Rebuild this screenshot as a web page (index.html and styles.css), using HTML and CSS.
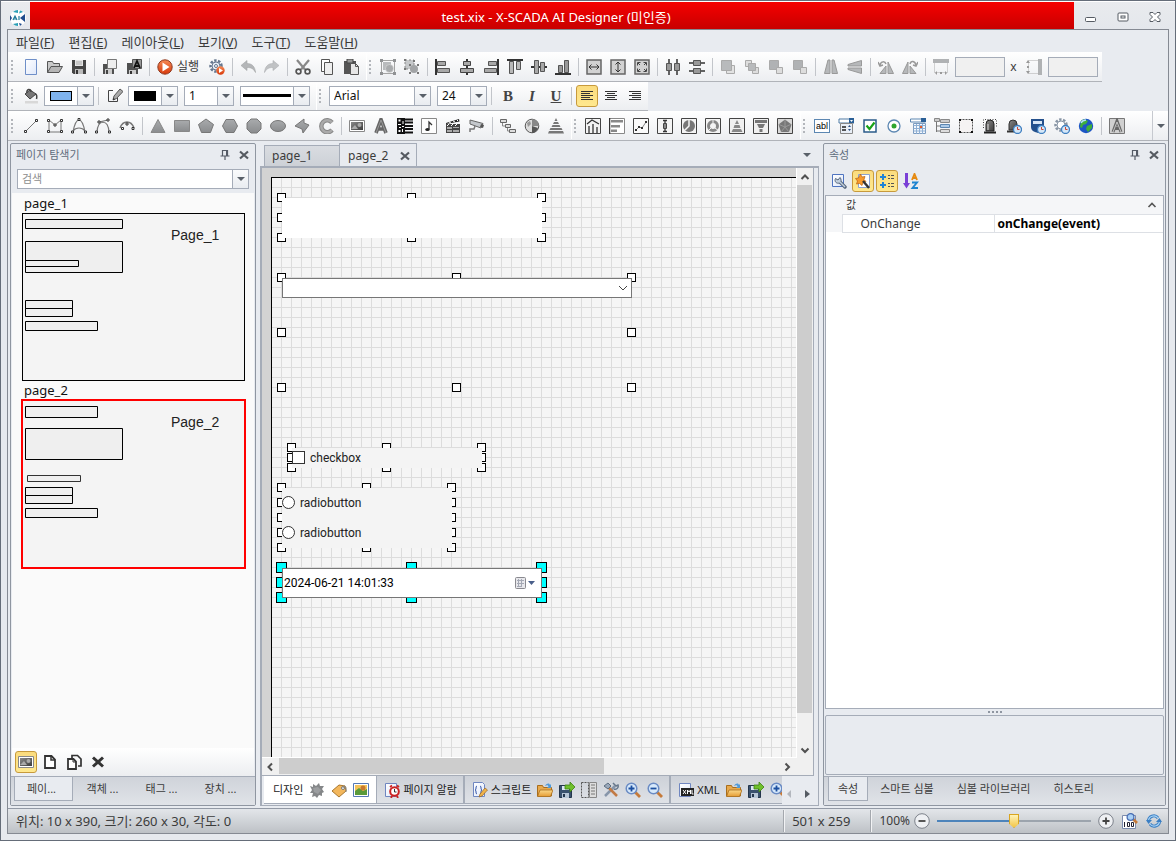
FILE: index.html
```html
<!DOCTYPE html>
<html lang="ko">
<head>
<meta charset="utf-8">
<title>test.xix - X-SCADA AI Designer</title>
<link rel="stylesheet" href="styles.css">
</head>
<body>
<svg class="sprite" aria-hidden="true">
<defs>
<linearGradient id="gr" x1="0" y1="0" x2="0" y2="1"><stop offset="0" stop-color="#a9abad"/><stop offset="1" stop-color="#8a8c8e"/></linearGradient>
<linearGradient id="dk" x1="0" y1="0" x2="1" y2="1"><stop offset="0" stop-color="#8a8a8a"/><stop offset="1" stop-color="#3c3c3c"/></linearGradient>
<linearGradient id="pg" x1="0" y1="0" x2="1" y2="1"><stop offset="0" stop-color="#fff"/><stop offset="1" stop-color="#dfe8fa"/></linearGradient>
<linearGradient id="or" x1="0" y1="0" x2="0" y2="1"><stop offset="0" stop-color="#f58a55"/><stop offset="1" stop-color="#d8390a"/></linearGradient>
<linearGradient id="fo" x1="0" y1="0" x2="0" y2="1"><stop offset="0" stop-color="#fbd98a"/><stop offset="1" stop-color="#e59c34"/></linearGradient>
</defs>
<symbol id="i-new" viewBox="0 0 16 16"><path d="M2.500.5h11v15h-11z" fill="url(#pg)" stroke="#6f8fc8"/></symbol>
<symbol id="i-open" viewBox="0 0 16 16"><path d="M.5 13.500v-11h5l1 2h6v3" fill="#c9c9c9" stroke="#555"/><path d="M.5 13.500l3.500-6h11.500l-3.500 6z" fill="#b5b5b5" stroke="#555"/></symbol>
<symbol id="i-save" viewBox="0 0 16 16"><path d="M1 1h14v14H2.500L1 13.500z" fill="#454545"/><path d="M4 1h8v6H4z" fill="#e4e4e4"/><path d="M5 3h6M5 5h6" stroke="#aaa"/><path d="M4 10h8v5H4z" fill="#bbb"/><path d="M5 11h2v4H5z" fill="#333"/></symbol>
<symbol id="i-saveas" viewBox="0 0 16 16"><path d="M1 5h11v10H1z" fill="#505050"/><path d="M3 10h7v5H3z" fill="#ccc"/><path d="M4 11h2v4H4z" fill="#444"/><path d="M5.500.500h9v9h-9z" fill="#eee" stroke="#777"/></symbol>
<symbol id="i-saveall" viewBox="0 0 16 16"><path d="M1 4h11v11H1z" fill="#505050"/><path d="M3 11h7v4H3z" fill="#ccc"/><path d="M4 12h2v3H4z" fill="#333"/><path d="M6.500.500h9v9h-9z" fill="#999" stroke="#555"/><path d="M8 9l3-7 3 7M9 7h4" fill="none" stroke="#111" stroke-width="1.800"/></symbol>
<symbol id="i-run" viewBox="0 0 16 16"><circle cx="8" cy="8" r="7.200" fill="url(#or)" stroke="#8f3a20"/><path d="M5.500 3.500l7 4.500-7 4.500z" fill="#fff"/></symbol>
<symbol id="i-gearrun" viewBox="0 0 16 16"><circle cx="7" cy="7" r="5.500" fill="none" stroke="#66778f" stroke-width="2.500" stroke-dasharray="2.400 1.500"/><circle cx="7" cy="7" r="4" fill="#e8eef6" stroke="#66778f"/><circle cx="7" cy="7" r="1.500" fill="#fff" stroke="#66778f"/><circle cx="11.500" cy="11.500" r="4.200" fill="url(#or)"/><path d="M10 9l4 2.500-4 2.500z" fill="#fff"/></symbol>
<symbol id="i-undo" viewBox="0 0 16 16"><path d="M1 6.500l6-5v3c5 0 8 3 8.500 9-2-4-4.500-5-8.500-5v3z" fill="#b4b6b8" stroke="#a2a4a6" stroke-width=".6"/></symbol>
<symbol id="i-redo" viewBox="0 0 16 16"><path d="M15 6.500l-6-5v3c-5 0-8 3-8.500 9 2-4 4.500-5 8.500-5v3z" fill="#c0c2c4" stroke="#adafb1" stroke-width=".6"/></symbol>
<symbol id="i-cut" viewBox="0 0 16 16"><path d="M2 1l8 9.500M14 1l-8 9.500" stroke="#888" stroke-width="2.200"/><circle cx="3.500" cy="12.500" r="2.400" fill="none" stroke="#555" stroke-width="1.700"/><circle cx="12.500" cy="12.500" r="2.400" fill="none" stroke="#555" stroke-width="1.700"/></symbol>
<symbol id="i-copy" viewBox="0 0 16 16"><path d="M2.500.500h8v12h-8z" fill="#fff" stroke="#555"/><path d="M5.500 3.500h8v12h-8z" fill="#eee" stroke="#555"/></symbol>
<symbol id="i-paste" viewBox="0 0 16 16"><path d="M1 2h12v13H1z" fill="#555"/><path d="M4 0h6v4H4z" fill="#999" stroke="#444"/><path d="M7.500 4.500h5l3 3v8h-8z" fill="#e6e6e6" stroke="#555"/><path d="M12.500 4.500v3h3" fill="none" stroke="#555"/></symbol>
<symbol id="i-group" viewBox="0 0 16 16"><path d="M1.500 1.500h13v13h-13z" fill="none" stroke="#a4a4a4"/><path d="M3 3h8v8H3z" fill="#b9bbbd"/><circle cx="9.500" cy="9.500" r="4" fill="#a9abad" stroke="#e4e4e4" stroke-width=".5"/><path d="M0 0h3v3H0zM13 0h3v3h-3zM0 13h3v3H0zM13 13h3v3h-3z" fill="#909294"/></symbol>
<symbol id="i-ungroup" viewBox="0 0 16 16"><path d="M1 1h9v9H1z" fill="#c6c8ca" stroke="#888" stroke-dasharray="2 2"/><circle cx="10" cy="10" r="4" fill="#a2a4a6"/><path d="M0 0h2v2H0zM9 1h2v2H9zM0 9h2v2H0zM5 5h2v2H5zM13 5h2v2h-2zM5 13h2v2H5zM13 13h2v2h-2z" fill="#777"/></symbol>
<symbol id="i-al" viewBox="0 0 16 16"><path d="M1 0v16" stroke="#333" stroke-width="2"/><path d="M2.500 2.500h8v4h-8zM2.500 9.500h12v4h-12z" fill="#a8a8a8" stroke="#555"/></symbol>
<symbol id="i-ac" viewBox="0 0 16 16"><path d="M8 0v16" stroke="#333" stroke-width="2"/><path d="M4.500 2.500h7v4h-7zM1.500 9.500h13v4h-13z" fill="#a8a8a8" stroke="#444"/></symbol>
<symbol id="i-ar" viewBox="0 0 16 16"><path d="M15 0v16" stroke="#333" stroke-width="2"/><path d="M5.500 2.500h8v4h-8zM1.500 9.500h12v4h-12z" fill="#a8a8a8" stroke="#555"/></symbol>
<symbol id="i-at" viewBox="0 0 16 16"><path d="M0 1h16" stroke="#333" stroke-width="2"/><path d="M2.500 2.500h4v12h-4zM9.500 2.500h4v8h-4z" fill="#b8b8b8" stroke="#555"/></symbol>
<symbol id="i-am" viewBox="0 0 16 16"><path d="M0 8h16" stroke="#333" stroke-width="2"/><path d="M3.500 1.500h4v13h-4zM9.500 3.500h4v9h-4z" fill="#a8a8a8" stroke="#555"/></symbol>
<symbol id="i-ab" viewBox="0 0 16 16"><path d="M0 15h16" stroke="#333" stroke-width="2"/><path d="M3.500 6.500h4v7h-4zM9.500 1.500h4v12h-4z" fill="#999" stroke="#555"/></symbol>
<symbol id="i-sw" viewBox="0 0 16 16"><path d="M1 1h14v14H1z" fill="#d2d2d2" stroke="#666" stroke-width="1.500"/><path d="M3 8h10M5.500 5.500L3 8l2.500 2.500M10.500 5.500L13 8l-2.500 2.500" fill="none" stroke="#333"/></symbol>
<symbol id="i-sh" viewBox="0 0 16 16"><path d="M1 1h14v14H1z" fill="#d2d2d2" stroke="#666" stroke-width="1.500"/><path d="M8 3v10M5.500 5.500L8 3l2.500 2.500M5.500 10.500L8 13l2.500-2.500" fill="none" stroke="#333"/></symbol>
<symbol id="i-sb" viewBox="0 0 16 16"><path d="M1 1h14v14H1z" fill="#d2d2d2" stroke="#666" stroke-width="1.500"/><path d="M4 4l8 8M12 4l-8 8M3.500 6.500v-3h3M9.500 3.500h3v3M3.500 9.500v3h3M12.500 9.500v3h-3" fill="none" stroke="#444"/><path d="M6 6h4v4H6z" fill="#d2d2d2"/></symbol>
<symbol id="i-dh" viewBox="0 0 16 16"><path d="M4 0v16M12 0v16" stroke="#333" stroke-width="1.500"/><path d="M1.500 4.500h5v7h-5zM9.500 4.500h5v7h-5z" fill="#999" stroke="#555"/></symbol>
<symbol id="i-dv" viewBox="0 0 16 16"><path d="M0 4h16M0 12h16" stroke="#333" stroke-width="1.500"/><path d="M4.500 1.500h7v5h-7zM4.500 9.500h7v5h-7z" fill="#999" stroke="#555"/></symbol>
<symbol id="i-z1" viewBox="0 0 16 16"><g stroke="#aaa"><path d="M6.500 6.500h8v8h-8z" fill="#e2e2e2"/><path d="M1.500 1.500h10v10h-10z" fill="#b8babc"/></g></symbol>
<symbol id="i-z2" viewBox="0 0 16 16"><g stroke="#aaa"><path d="M1.500 1.500h6v6h-6z" fill="#ddd"/><path d="M8.500 8.500h6v6h-6z" fill="#ddd"/><path d="M4.500 4.500h7v7h-7z" fill="#b8babc"/></g></symbol>
<symbol id="i-z3" viewBox="0 0 16 16"><g stroke="#aaa"><path d="M1.500 1.500h9v9h-9z" fill="#b0b2b4"/><path d="M8.500 8.500h6v6h-6z" fill="#ddd"/></g></symbol>
<symbol id="i-fh" viewBox="0 0 16 16"><path d="M7 1H5L1.500 14.500H7zM9 1h2l3.500 13.500H9z" fill="#b6b8ba" stroke="#999"/></symbol>
<symbol id="i-fv" viewBox="0 0 16 16"><path d="M1 7V5.500l13.500-4V7zM1 9v1.500l13.500 4V9z" fill="#b6b8ba" stroke="#999"/></symbol>
<symbol id="i-rl" viewBox="0 0 16 16"><path d="M8 14.500V7l-6 7.500zM10 14.500V3l5.500 11.500z" fill="#b6b8ba" stroke="#999"/><path d="M2 6c1-4 5-4 6-1M0 3l2 4 3-1" fill="none" stroke="#999" stroke-width="1.500"/></symbol>
<symbol id="i-rr" viewBox="0 0 16 16"><path d="M6 14.500V3L.5 14.500zM8 14.500V7l6 7.500z" fill="#b6b8ba" stroke="#999"/><path d="M8 5c1-4 5-3 6 1M16 3l-2 4-3-1" fill="none" stroke="#999" stroke-width="1.500"/></symbol>
<symbol id="i-w" viewBox="0 0 16 16"><path d="M0 0h16v4H0z" fill="#b0b2b4"/><path d="M1.500 4.500v9h13v-9" fill="none" stroke="#aaa" stroke-dasharray="1 1"/><path d="M2 14l2-2v4zM14 14l-2-2v4zM7 13h2v2H7z" fill="#999"/></symbol>
<symbol id="i-h" viewBox="0 0 16 16"><path d="M12 0h4v16h-4z" fill="#b0b2b4"/><path d="M12.500 1.500h-10v13h10" fill="none" stroke="#aaa" stroke-dasharray="1 1"/><path d="M2 1l2 3H0zM2 15l2-3H0zM1 7h2v2H1z" fill="#999"/></symbol>
<symbol id="i-fill" viewBox="0 0 16 16"><path d="M2 6l5-4 6 4-6 5z" fill="#777" stroke="#444"/><path d="M4 5c-1-4 4-5 4-1M12 6c2 0 2 3 1.500 5" fill="none" stroke="#444" stroke-width="1.500"/><path d="M2 13h13v2.500H2z" fill="#d8d8d8"/></symbol>
<symbol id="i-pen" viewBox="0 0 16 16"><path d="M6 2.500H1.500v11h9V10" fill="none" stroke="#444"/><path d="M6 12l1-4 6-7 3 2.500-6.500 7z" fill="#aaa" stroke="#555"/><path d="M6 12l.5-2 1.500 1.200z" fill="#222"/></symbol>
<symbol id="i-tl" viewBox="0 0 16 16"><path d="M2 3.500h12M2 5.500h9M2 7.500h12M2 9.500h9M2 11.500h12" stroke="#333"/></symbol>
<symbol id="i-tc" viewBox="0 0 16 16"><path d="M2 3.500h12M4 5.500h8M2 7.500h12M4 9.500h8M2 11.500h12" stroke="#333"/></symbol>
<symbol id="i-tr" viewBox="0 0 16 16"><path d="M2 3.500h12M5 5.500h9M2 7.500h12M5 9.500h9M2 11.500h12" stroke="#333"/></symbol>
<symbol id="i-line" viewBox="0 0 16 16"><path d="M3 13L13 3" stroke="#777"/><path d="M1.500 12.500h2v2h-2zM12.500 1.500h2v2h-2z" fill="#fff" stroke="#333"/></symbol>
<symbol id="i-poly" viewBox="0 0 16 16"><path d="M2 2l6 5 6-5v12H2z" fill="none" stroke="#777"/><path d="M.5 1.500h2v2h-2zM13.500 1.500h2v2h-2zM7 6h2v2H7zM.5 12.500h2v2h-2zM13.500 12.500h2v2h-2z" fill="#fff" stroke="#333"/></symbol>
<symbol id="i-curve" viewBox="0 0 16 16"><path d="M2 14C5-2 11-2 14 14M2 13c3-4 9-4 12 0" fill="none" stroke="#777" stroke-width="1.200"/><path d="M7 .5h2v2H7zM.5 13h2v2h-2zM13.500 13h2v2h-2z" fill="#fff" stroke="#333"/></symbol>
<symbol id="i-curve2" viewBox="0 0 16 16"><path d="M2 14C3 1 13 1 14 14M4 4l9-2" fill="none" stroke="#777" stroke-width="1.200"/><path d="M3 3h2v2H3zM12 1h2v2h-2zM.5 13h2v2h-2zM13.500 13h2v2h-2z" fill="#fff" stroke="#333"/></symbol>
<symbol id="i-arc" viewBox="0 0 16 16"><path d="M1 10C4 2 12 2 15 10" fill="none" stroke="#777" stroke-width="1.500"/><path d="M7 5h2v2H7zM2.500 9.500h2v2h-2zM13 9.500h2v2h-2z" fill="#fff" stroke="#333"/></symbol>
<symbol id="i-tri" viewBox="0 0 16 16"><path d="M8 1.500l7 13H1z" fill="url(#gr)" stroke="#888"/></symbol>
<symbol id="i-rect" viewBox="0 0 16 16"><path d="M.5 2.500h15v11H.5z" fill="url(#gr)" stroke="#888"/></symbol>
<symbol id="i-pent" viewBox="0 0 16 16"><path d="M8 1l7.500 5.500-3 8h-9l-3-8z" fill="url(#gr)" stroke="#777"/></symbol>
<symbol id="i-hex" viewBox="0 0 16 16"><path d="M4 1.500h8L15.500 8 12 14.500H4L.5 8z" fill="url(#gr)" stroke="#777"/></symbol>
<symbol id="i-oct" viewBox="0 0 16 16"><path d="M5 1h6l4 4v6l-4 4H5l-4-4V5z" fill="url(#gr)" stroke="#777"/></symbol>
<symbol id="i-ell" viewBox="0 0 16 16"><ellipse cx="8" cy="8" rx="7.500" ry="5.500" fill="url(#gr)" stroke="#777"/></symbol>
<symbol id="i-free" viewBox="0 0 16 16"><path d="M1 8l9-7v4l5 2-6 8-1-4z" fill="url(#gr)" stroke="#777"/></symbol>
<symbol id="i-c" viewBox="0 0 16 16"><path d="M14 4.500a6 6 0 1 0 0 7.500" fill="none" stroke="#888" stroke-width="4.500"/><path d="M14 4.500a6 6 0 1 0 0 7.500" fill="none" stroke="#aaa" stroke-width="2.500"/></symbol>
<symbol id="i-img" viewBox="0 0 16 16"><path d="M.5 2.500h15v11H.5z" fill="#fff" stroke="#888"/><path d="M2 4h12v8H2z" fill="url(#dk)"/><path d="M2 11l4-4 3 4z" fill="#aaa"/><circle cx="10.500" cy="7" r="2" fill="#aaa"/></symbol>
<symbol id="i-a" viewBox="0 0 16 16"><path d="M3 15L8 1.500 13 15M5 11h6" fill="none" stroke="#666" stroke-width="3.600"/><path d="M3 15L8 2 13 15" fill="none" stroke="#999" stroke-width="1"/></symbol>
<symbol id="i-qr" viewBox="0 0 16 16"><path d="M0 0h8v16H0z" fill="#111"/><path d="M1.500 1.500h2v2h-2zM1.500 12h2v2h-2zM5.500 3h1v3h-1zM1 6h3v1H1zM2 9h2v1H2zM5 8h2v1H5zM5 11h1v3H5z" fill="#fff"/><path d="M8 1.500h8M8 4.500h8M8 8h8M8 11h8M8 14.500h8" stroke="#111" stroke-width="2"/></symbol>
<symbol id="i-note" viewBox="0 0 16 16"><path d="M.5.500h15v15H.5z" fill="#fdfdfd" stroke="#888"/><path d="M8 11V4l3 3" fill="none" stroke="#333" stroke-width="1.300"/><ellipse cx="6.500" cy="11.500" rx="2.200" ry="1.600" fill="#222"/></symbol>
<symbol id="i-clap" viewBox="0 0 16 16"><path d="M1 6h14v9H1z" fill="#444"/><path d="M2 9h5v2H2zM8 9h6v1H8zM2 12h5v2H2zM8 12h6v2H8z" fill="#aaa"/><path d="M1 5l13-4 .5 2.500L1 6z" fill="#222"/><path d="M4 4l2 1M8 3l2 1M12 2l1 1M4 6l-2 2M8 6L6 8M12 6l-2 2" stroke="#fff"/></symbol>
<symbol id="i-cctv" viewBox="0 0 16 16"><path d="M1 2l13 3.500L12 10 1 6z" fill="#c4c8cc" stroke="#666"/><path d="M12 6l3 1-1 3-3-1z" fill="#555"/><path d="M6 8l-1 3H1v3" fill="none" stroke="#777" stroke-width="1.500"/></symbol>
<symbol id="i-flow" viewBox="0 0 16 16"><path d="M.5 1.500h6v3h-6zM5.500 6.500h5v3h-5zM9.500 11.500h6v3h-6z" fill="#ddd" stroke="#666"/><path d="M2.500 5v3H5M7.500 10v3H9" fill="none" stroke="#888"/></symbol>
<symbol id="i-globe" viewBox="0 0 16 16"><circle cx="8" cy="8" r="6.800" fill="#ddd" stroke="#555"/><path d="M8 8L8 1a7 7 0 0 1 7 7z" fill="#888"/><path d="M8 8l6 2a7 7 0 0 1-6 5z" fill="#555"/><path d="M3 5l3-2 1 3-3 3z" fill="#999"/></symbol>
<symbol id="i-pyr" viewBox="0 0 16 16"><path d="M8 0l1.500 3h-3zM6 4h4l1 2H5zM4.500 7h7l1 2h-9zM2.500 10h11l1 2h-13zM1 13h14l1 2.500H0z" fill="#777"/></symbol>
<symbol id="i-ch1" viewBox="0 0 16 16"><path d="M.5.500h15v15H.5z" fill="#f4f4f4" stroke="#444"/><path d="M2 6l5-4 7 4" fill="none" stroke="#333" stroke-width="1.300"/><path d="M3 8h2v7H3zM7 6h2v9H7zM11 9h2v6h-2z" fill="#777"/></symbol>
<symbol id="i-ch2" viewBox="0 0 16 16"><path d="M.5.500h15v15H.5z" fill="#fff" stroke="#888"/><path d="M.5 0v16" stroke="#333" stroke-width="1.500"/><path d="M2 2h12v2.500H2zM2 7h9v2.500H2zM2 11.500h6V14H2z" fill="#888"/></symbol>
<symbol id="i-ch3" viewBox="0 0 16 16"><path d="M.5.500h15v15H.5z" fill="#fafafa" stroke="#444"/><path d="M3 12l3-3 3 1 4-6" fill="none" stroke="#888"/><path d="M2 11h2v2H2zM5 8h2v2H5zM8 9h2v2H8zM12 3h2v2h-2z" fill="#333"/></symbol>
<symbol id="i-ch4" viewBox="0 0 16 16"><path d="M.5.500h15v15H.5z" fill="#f4f4f4" stroke="#444"/><path d="M8 2v12M6 2.500h4M6 13.500h4" stroke="#333" stroke-width="1.300"/><path d="M6.500 5.500h3v5h-3z" fill="#888" stroke="#444"/></symbol>
<symbol id="i-ch5" viewBox="0 0 16 16"><path d="M.5.500h15v15H.5z" fill="#f4f4f4" stroke="#444"/><circle cx="8" cy="8" r="6" fill="#777"/><path d="M8 1v7l-5 5" stroke="#f4f4f4" stroke-width="1.500" fill="none"/></symbol>
<symbol id="i-ch6" viewBox="0 0 16 16"><path d="M.5.500h15v15H.5z" fill="#f4f4f4" stroke="#444"/><circle cx="8" cy="8" r="4.500" fill="none" stroke="#888" stroke-width="3"/><path d="M8 5V1M10 10l4 3M6 10l-3 3" stroke="#f4f4f4"/></symbol>
<symbol id="i-ch7" viewBox="0 0 16 16"><path d="M.5.500h15v15H.5z" fill="#f0f0f0" stroke="#444"/><path d="M8 2l2 4H6zM5.500 7h5l1 3h-7zM4 11h8l1.500 3h-11z" fill="#888"/></symbol>
<symbol id="i-ch8" viewBox="0 0 16 16"><path d="M.5.500h15v15H.5z" fill="#f0f0f0" stroke="#444"/><path d="M2 2h12v3H2zM4 6h8l-2 4H6zM6.500 11h3v3h-3z" fill="#777"/></symbol>
<symbol id="i-ch9" viewBox="0 0 16 16"><path d="M.5.500h15v15H.5z" fill="#d8d8d8" stroke="#444"/><path d="M8 1.500l6.500 5-2.500 7.500H4L1.500 6.500z" fill="#777"/><path d="M8 2v7M8 9l5.500-2.500M8 9l3.500 4.500M8 9l-3.500 4.500M8 9L2 6.500" stroke="#999"/></symbol>
<symbol id="i-cmb" viewBox="0 0 16 16"><path d="M1 1h15v4H1z" fill="#fff" stroke="#4f7aa5"/><path d="M11 0h5v5h-5z" fill="#2a5f96"/><path d="M12 2h3l-1.500 2z" fill="#fff"/><path d="M2.500 5.500h12v10h-12z" fill="#e9eff7" stroke="#888"/><path d="M4 9h4M4 12h4" stroke="#222" stroke-width="1.300"/><path d="M10 9l1.500-2L13 9zM10 11l1.500 2 1.500-2z" fill="#2a4f86"/></symbol>
<symbol id="i-chk" viewBox="0 0 16 16"><path d="M2 2h12v12H2z" fill="#fff" stroke="#2b5c8a" stroke-width="1.500"/><path d="M4.500 7.500l3 3.500 5-6.500" fill="none" stroke="#18a218" stroke-width="2.200"/></symbol>
<symbol id="i-rad" viewBox="0 0 16 16"><circle cx="8" cy="8" r="6" fill="#fff" stroke="#5c87b2" stroke-width="1.300"/><circle cx="8" cy="8" r="2.500" fill="#2ea52e"/></symbol>
<symbol id="i-cal" viewBox="0 0 16 16"><path d="M.5 1h15v3H.5z" fill="#fff" stroke="#5c87b2"/><path d="M11 0h5v4h-5z" fill="#2a5f96"/><path d="M3.500 5.500h12v10h-12z" fill="#f4f8fd" stroke="#7c9cc0"/><path d="M3.500 7.500h12M3.500 10.500h12M3.500 13h12M6.500 6v10M9.500 6v10M12.500 6v10" stroke="#8fb0d4"/><path d="M10 8h2v2h-2z" fill="#e45c2c"/></symbol>
<symbol id="i-tree" viewBox="0 0 16 16"><path d="M2.500 2v12M2.500 8H6M2.500 13H6" stroke="#777" fill="none"/><path d="M.5.500h5v3h-5zM6.500 1.500h9v3h-9z" fill="#ccc" stroke="#888"/><path d="M6.500 6.500h9v3h-9z" fill="#aecbe8" stroke="#5c87b2"/><path d="M6.500 11.500h9v3h-9z" fill="#ddd" stroke="#888"/></symbol>
<symbol id="i-pnl" viewBox="0 0 16 16"><path d="M1.500 1.500h13v13h-13z" fill="#f5f3f3" stroke="#555" stroke-dasharray="2 1"/><path d="M1 1h2v2H1zM13 1h2v2h-2zM1 13h2v2H1zM13 13h2v2h-2z" fill="#111"/></symbol>
<symbol id="i-sir" viewBox="0 0 16 16"><path d="M4 13V6a4 4 0 0 1 8 0v7z" fill="url(#dk)" stroke="#222"/><path d="M2 13.500h12v2H2z" fill="#222"/><path d="M6 12V6" stroke="#ddd"/><path d="M1.500 10V1.500h13V10" fill="none" stroke="#444" stroke-dasharray="1 1.500"/></symbol>
<symbol id="i-sirc" viewBox="0 0 16 16"><path d="M3 12V6a4 4 0 0 1 8 0v6z" fill="url(#dk)" stroke="#333"/><path d="M1 12.500h10v2H1z" fill="#333"/><circle cx="11.500" cy="11.500" r="4" fill="#d4e7f8" stroke="#3f7fc0" stroke-width="1.300"/><path d="M11.500 9v2.500h2" stroke="#c43" fill="none"/></symbol>
<symbol id="i-dbc" viewBox="0 0 16 16"><path d="M1 1h13v8c0 4-4 5-6 6-3-1-7-2-7-6z" fill="#24508c"/><path d="M3 3h9v3H3z" fill="#d8e6f5"/><circle cx="11.500" cy="11.500" r="4" fill="#d4e7f8" stroke="#3f7fc0" stroke-width="1.300"/><path d="M11.500 9v2.500h2" stroke="#c43" fill="none"/></symbol>
<symbol id="i-gearc" viewBox="0 0 16 16"><circle cx="7" cy="7" r="5.500" fill="none" stroke="#8794a4" stroke-width="2.500" stroke-dasharray="2.400 1.500"/><circle cx="7" cy="7" r="4" fill="#fff" stroke="#8794a4"/><circle cx="11.500" cy="11.500" r="4" fill="#d4e7f8" stroke="#3f7fc0" stroke-width="1.300"/><path d="M11.500 9v2.500h2" stroke="#c43" fill="none"/></symbol>
<symbol id="i-earth" viewBox="0 0 16 16"><circle cx="8" cy="8" r="7.200" fill="#1c55c4"/><path d="M3 3c3-3 5-1 7 0l-2 3-3 1-1 3-2-1zM9 8l5-2v4l-4 4-2-3z" fill="#3fae3a"/><path d="M3 5c1-2 3-3 5-3" stroke="#b7e0ff" fill="none" stroke-width="1.300"/></symbol>
<symbol id="i-abox" viewBox="0 0 16 16"><path d="M.5.500h15v15H.5z" fill="#d0d0d0" stroke="#777"/><path d="M4 14L8 3l4 11M5.500 10.500h5" fill="none" stroke="#666" stroke-width="3"/><path d="M4 14L8 4l4 10" fill="none" stroke="#ddd" stroke-width=".8"/></symbol>
<symbol id="i-pin" viewBox="0 0 12 12"><path d="M3.500 1v6M8.500 1v6M3 1.500h6M1.500 7h9M6 7v4" stroke="#555b66" stroke-width="1.200" fill="none"/><path d="M7.500 2v5" stroke="#555b66"/></symbol>
<symbol id="i-x" viewBox="0 0 12 12"><path d="M2 2.500l8 7M10 2.500l-8 7" stroke="#555a61" stroke-width="2.200"/></symbol>
<symbol id="i-doc" viewBox="0 0 16 16"><path d="M3 2h6.500L13 5.500V14H3z" fill="#fff" stroke="#333" stroke-width="1.800"/><path d="M9 2v4h4" fill="none" stroke="#333" stroke-width="1.500"/></symbol>
<symbol id="i-docs" viewBox="0 0 16 16"><path d="M6 4V1.500h5.500L15 5v7h-3" fill="none" stroke="#333" stroke-width="1.700"/><path d="M2 5h5.500L10 7.500V15H2z" fill="#fff" stroke="#333" stroke-width="1.800"/><path d="M7 5v3h3" fill="none" stroke="#333"/></symbol>
<symbol id="i-xb" viewBox="0 0 16 16"><path d="M3 3.500l10 9M13 3.500l-10 9" stroke="#333" stroke-width="3"/></symbol>
<symbol id="i-puz" viewBox="0 0 16 16"><path d="M1 4l3 1 0-3 3 2 3-3 1 3 4 0-2 3 2 3-2 1 0 3-3-1-2 3-2-2-3 1 1-4-3 0 2-3z" fill="#858789"/><path d="M4 6l5-1 3 3-3 4-4-2z" fill="#9c9ea0"/></symbol>
<symbol id="i-tag" viewBox="0 0 16 16"><path d="M1 9l7-6 6 1 1 5-7 6z" fill="#f3b75c" stroke="#a9772e"/><circle cx="12" cy="6" r="1.500" fill="#fff" stroke="#777"/><path d="M12 6c1-4 4-2 3 4" fill="none" stroke="#888"/></symbol>
<symbol id="i-pic" viewBox="0 0 16 16"><path d="M.5 1.500h15v13H.5z" fill="#fff" stroke="#5579b5"/><path d="M2 3h12v10H2z" fill="#f4c35a"/><path d="M2 9l4-3 4 3 4-2v6H2z" fill="#5a9a3a"/><circle cx="10" cy="6" r="2.500" fill="#c7792e"/></symbol>
<symbol id="i-alarm" viewBox="0 0 16 16"><path d="M1.500 1.500h11v13h-11z" fill="url(#pg)" stroke="#6f86c0"/><circle cx="10.500" cy="9.500" r="4.300" fill="#fff" stroke="#c22" stroke-width="2"/><path d="M10.500 7v3h2" fill="none" stroke="#333"/><path d="M6 5l2-1.500M15 5l-2-1.500M8 14l-1 2M13 14l1 2" stroke="#c22" stroke-width="1.800"/></symbol>
<symbol id="i-scr" viewBox="0 0 16 16"><path d="M1.500.500h9l2 2v12h-11z" fill="url(#pg)" stroke="#6f86c0"/><path d="M5 4c-2 0 0 4-2 4 2 0 0 4 2 4M8 4c2 0 0 4 2 4-2 0 0 4-2 4" fill="none" stroke="#3355a8"/><path d="M7 15l1-3 5-6 2.500 2-5.500 6z" fill="#f0b34a" stroke="#976422" stroke-width=".7"/></symbol>
<symbol id="i-fo" viewBox="0 0 16 16"><path d="M.5 14V3.500h5l1 2h8V14z" fill="#e8a94c" stroke="#a86d1c"/><path d="M.5 14.500L3 8h13l-2.500 6.500z" fill="url(#fo)" stroke="#a86d1c" stroke-width=".8"/><path d="M8 4c2-3 4-3 5-1l1-1v4h-4l1.500-1.500C11 3 10 3 8 4z" fill="#4f9ad8"/></symbol>
<symbol id="i-exp" viewBox="0 0 16 16"><path d="M.5 3.500h12v12h-12z" fill="#39516e" stroke="#24364c"/><path d="M3 4h7v4H3z" fill="#dbe6f2"/><path d="M3 11h7v5H3z" fill="#b5c5d6"/><path d="M4 12h2v3H4z" fill="#24364c"/><path d="M6 3h5V0l5 5-5 5V7H6z" fill="#6fc02c" stroke="#3d8010" stroke-width=".8"/></symbol>
<symbol id="i-lay" viewBox="0 0 16 16"><path d="M.5.500h7v15h-7z" fill="none" stroke="#555" stroke-dasharray="2 1"/><path d="M8.500.500h7v15h-7z" fill="#ddd" stroke="#888"/><path d="M10 3h4M10 6h4M10 9h4M10 12h4" stroke="#777"/></symbol>
<symbol id="i-tool" viewBox="0 0 16 16"><path d="M2 14L12 4" stroke="#8796aa" stroke-width="2.500"/><path d="M10 1l3 3 2-1c1 3-2 5-4 4" fill="none" stroke="#68788c" stroke-width="1.500"/><path d="M6 6l8 8" stroke="#c27a45" stroke-width="2.500"/><path d="M1 4l4-3 3 3-3 3z" fill="#9aa8ba" stroke="#5d6d80"/></symbol>
<symbol id="i-zi" viewBox="0 0 16 16"><path d="M10 10l5 5" stroke="#c57a3a" stroke-width="2.800"/><circle cx="6.500" cy="6.500" r="5.300" fill="#d7e9fb" stroke="#6a8bc4" stroke-width="1.500"/><path d="M3.500 6.500h6M6.500 3.500v6" stroke="#1c4fa0" stroke-width="1.800"/></symbol>
<symbol id="i-zo" viewBox="0 0 16 16"><path d="M10 10l5 5" stroke="#c57a3a" stroke-width="2.800"/><circle cx="6.500" cy="6.500" r="5.300" fill="#d7e9fb" stroke="#6a8bc4" stroke-width="1.500"/><path d="M3.500 6.500h6" stroke="#1c4fa0" stroke-width="1.800"/></symbol>
<symbol id="i-xml" viewBox="0 0 16 16"><path d="M1.500 1.500h11v13h-11z" fill="url(#pg)" stroke="#6f86c0"/><path d="M3 6h13v8H3z" fill="#222"/><path d="M5 8l3 4M8 8l-3 4M9.500 12V8l1.500 2 1.500-2v4M14 8v4h1.500" fill="none" stroke="#fff"/></symbol>
<symbol id="i-wr" viewBox="0 0 16 16"><path d="M1.500 1.500h11v12h-11z" fill="url(#pg)" stroke="#4f74c0"/><path d="M8 8l6 6" stroke="#55667c" stroke-width="3.400" stroke-linecap="round"/><path d="M4.500 5.500c-1.500 3 1 5.500 4 4.500 2-1 2-4 .5-5.500L7 7z" fill="#c2cfdd" stroke="#55667c"/><path d="M8 8l6 6" stroke="#c2cfdd" stroke-width="1.400"/></symbol>
<symbol id="i-wand" viewBox="0 0 16 16"><path d="M3.500 1.500h11v13h-11z" fill="#fff" stroke="#8ba2d0"/><path d="M5.500 1l1.500 3 3-.5-1 3 2 2-3 1-1 3-2.500-2-3 .5 1-3-2-2.500 3-.5z" fill="#f79a2c" stroke="#b8600c" stroke-width=".7"/><path d="M8 8l6 7" stroke="#333" stroke-width="2.400"/></symbol>
<symbol id="i-cat" viewBox="0 0 16 16"><path d="M1 4h6M4 1v6M1 12h6M4 9v6" stroke="#1f83d6" stroke-width="2"/><path d="M9 2.500h2M12 2.500h3M9 5.500h2M12 5.500h3M9 10.500h2M12 10.500h3M9 13.500h2M12 13.500h3" stroke="#555"/></symbol>
<symbol id="i-az" viewBox="0 0 16 16"><path d="M2 0h3v10h2l-3.500 5.500L0 10h2z" fill="#7a3fd6"/><path d="M9 7l2.500-6L14 7M10 5h3" fill="none" stroke="#e58a12" stroke-width="1.900"/><path d="M9 9.500h5L9.500 15H15" fill="none" stroke="#1d84d0" stroke-width="1.900"/></symbol>
<symbol id="i-z100" viewBox="0 0 16 16"><path d="M.5 2.500h13v13H.5z" fill="#fff" stroke="#7c8cae"/><path d="M10 5l5 5" stroke="#c57a3a" stroke-width="2.600"/><circle cx="8.500" cy="4" r="3.400" fill="#a9d0f6" stroke="#4a6fb4" stroke-width="1.300"/><path d="M2.500 9v5M5.500 9.500h2v4h-2zM9.500 9.500h2v4h-2z" fill="none" stroke="#223"/></symbol>
<symbol id="i-ref" viewBox="0 0 16 16"><path d="M2.500 9C2 3 9 1 12 5M13.500 7c.5 6-6.500 8-9.500 4" fill="none" stroke="#3a7fc4" stroke-width="3"/><path d="M2.500 9C2 3 9 1 12 5M13.500 7c.5 6-6.500 8-9.500 4" fill="none" stroke="#a9d4f6" stroke-width="1.200"/><path d="M10 9l3.500-4L16 9zM0 7l2.500 4L6 7z" fill="#3a7fc4"/></symbol>
<symbol id="i-logo" viewBox="0 0 16 16"><circle cx="8" cy="8" r="8" fill="#fff"/><path d="M3 2a8 8 0 0 1 5-2v3zM13 2a8 8 0 0 0-3-1.500l-1 3zM3 14a8 8 0 0 0 5 2v-3z" fill="#2b9fb6"/><path d="M10 8l5-4v8zM9 13l3 1-2 2zM0 5l2 3-2 3z" fill="#1f4b8c"/><path d="M3 10l2-4 2 4M4 9h2M9 6v4" stroke="#1f7c9c" fill="none" stroke-width="1.200"/></symbol>
</svg>

<header class="titlebar">
  <div class="logo"><svg class="ic"><use href="#i-logo"/></svg></div>
  <h1 class="title">test.xix - X-SCADA AI Designer (미인증)</h1>
  <div class="winbtns">
    <button aria-label="최소화"><svg class="ic" viewBox="0 0 16 16"><rect x="2.500" y="8.500" width="10" height="4" rx="1" fill="#fff" stroke="#555b63"/></svg></button>
    <button aria-label="최대화"><svg class="ic" viewBox="0 0 16 16"><rect x="3" y="4" width="10" height="8" rx="1" fill="#fff" stroke="#555b63"/><rect x="6" y="7" width="4" height="2" fill="#fff" stroke="#555b63"/></svg></button>
    <button aria-label="닫기"><svg class="ic" viewBox="0 0 16 16"><path d="M3 3.500h3l2 2 2-2h3v2L10.500 8l2.500 2.500v2h-3l-2-2-2 2H3v-2L5.500 8 3 5.500z" fill="#fff" stroke="#555b63"/></svg></button>
  </div>
</header>

<div class="frame">
<nav class="menubar">
  <button>파일(<u>F</u>)</button><button>편집(<u>E</u>)</button><button>레이아웃(<u>L</u>)</button><button>보기(<u>V</u>)</button><button>도구(<u>T</u>)</button><button>도움말(<u>H</u>)</button>
</nav>

<div class="toolbar">
  <i class="grip first"></i>
  <button class="tb" aria-label="새로 만들기"><svg class="ic"><use href="#i-new"/></svg></button>
  <button class="tb" aria-label="열기"><svg class="ic"><use href="#i-open"/></svg></button>
  <button class="tb" aria-label="저장"><svg class="ic"><use href="#i-save"/></svg></button>
  <i class="sep"></i>
  <button class="tb" aria-label="다른 이름으로 저장"><svg class="ic"><use href="#i-saveas"/></svg></button>
  <button class="tb" aria-label="모두 저장"><svg class="ic"><use href="#i-saveall"/></svg></button>
  <i class="sep"></i>
  <button class="tb run"><svg class="ic"><use href="#i-run"/></svg>실행</button>
  <button class="tb" aria-label="실행 설정"><svg class="ic"><use href="#i-gearrun"/></svg></button>
  <i class="sep"></i>
  <button class="tb" aria-label="실행 취소"><svg class="ic"><use href="#i-undo"/></svg></button>
  <button class="tb" aria-label="다시 실행"><svg class="ic"><use href="#i-redo"/></svg></button>
  <i class="sep"></i>
  <button class="tb" aria-label="잘라내기"><svg class="ic"><use href="#i-cut"/></svg></button>
  <button class="tb" aria-label="복사"><svg class="ic"><use href="#i-copy"/></svg></button>
  <button class="tb" aria-label="붙여넣기"><svg class="ic"><use href="#i-paste"/></svg></button>
  <i class="grip"></i>
  <button class="tb" aria-label="그룹"><svg class="ic"><use href="#i-group"/></svg></button>
  <button class="tb" aria-label="그룹 해제"><svg class="ic"><use href="#i-ungroup"/></svg></button>
  <i class="sep"></i>
  <button class="tb" aria-label="왼쪽 맞춤"><svg class="ic"><use href="#i-al"/></svg></button>
  <button class="tb" aria-label="가운데 맞춤"><svg class="ic"><use href="#i-ac"/></svg></button>
  <button class="tb" aria-label="오른쪽 맞춤"><svg class="ic"><use href="#i-ar"/></svg></button>
  <button class="tb" aria-label="위쪽 맞춤"><svg class="ic"><use href="#i-at"/></svg></button>
  <button class="tb" aria-label="중간 맞춤"><svg class="ic"><use href="#i-am"/></svg></button>
  <button class="tb" aria-label="아래쪽 맞춤"><svg class="ic"><use href="#i-ab"/></svg></button>
  <i class="sep"></i>
  <button class="tb" aria-label="같은 너비"><svg class="ic"><use href="#i-sw"/></svg></button>
  <button class="tb" aria-label="같은 높이"><svg class="ic"><use href="#i-sh"/></svg></button>
  <button class="tb" aria-label="같은 크기"><svg class="ic"><use href="#i-sb"/></svg></button>
  <i class="sep"></i>
  <button class="tb" aria-label="가로 간격"><svg class="ic"><use href="#i-dh"/></svg></button>
  <button class="tb" aria-label="세로 간격"><svg class="ic"><use href="#i-dv"/></svg></button>
  <i class="sep"></i>
  <button class="tb" aria-label="맨 앞으로"><svg class="ic"><use href="#i-z1"/></svg></button>
  <button class="tb" aria-label="앞으로"><svg class="ic"><use href="#i-z2"/></svg></button>
  <button class="tb" aria-label="뒤로"><svg class="ic"><use href="#i-z3"/></svg></button>
  <button class="tb" aria-label="맨 뒤로"><svg class="ic"><use href="#i-z3"/></svg></button>
  <i class="sep"></i>
  <button class="tb" aria-label="좌우 대칭"><svg class="ic"><use href="#i-fh"/></svg></button>
  <button class="tb" aria-label="상하 대칭"><svg class="ic"><use href="#i-fv"/></svg></button>
  <i class="sep"></i>
  <button class="tb" aria-label="왼쪽 회전"><svg class="ic"><use href="#i-rl"/></svg></button>
  <button class="tb" aria-label="오른쪽 회전"><svg class="ic"><use href="#i-rr"/></svg></button>
  <i class="sep"></i>
  <span class="tb"><svg class="ic"><use href="#i-w"/></svg></span>
  <input class="size" aria-label="너비" disabled>
  <span class="times">x</span>
  <span class="tb"><svg class="ic"><use href="#i-h"/></svg></span>
  <input class="size" aria-label="높이" disabled>
</div>

<div class="toolbar format">
  <i class="grip first"></i>
  <button class="tb" aria-label="채우기"><svg class="ic"><use href="#i-fill"/></svg></button>
  <button class="combo w50" aria-label="채우기 색"><span class="swatch blue"></span><span class="arrow"></span></button>
  <i class="sep wide"></i>
  <button class="tb" aria-label="선"><svg class="ic"><use href="#i-pen"/></svg></button>
  <button class="combo w50" aria-label="선 색"><span class="swatch black"></span><span class="arrow"></span></button>
  <div class="combo w50 gap"><select aria-label="선 두께"><option>1</option></select><span class="arrow"></span></div>
  <button class="combo w70 gap" aria-label="선 종류"><span class="dash"></span><span class="arrow"></span></button>
  <i class="grip wide"></i>
  <div class="combo w102"><select aria-label="글꼴"><option>Arial</option></select><span class="arrow"></span></div>
  <div class="combo w50 gap"><select aria-label="글꼴 크기"><option>24</option></select><span class="arrow"></span></div>
  <i class="sep wide"></i>
  <button class="tb txt"><b>B</b></button>
  <button class="tb txt"><em>I</em></button>
  <button class="tb txt"><u>U</u></button>
  <i class="sep"></i>
  <button class="tb on" aria-label="왼쪽 정렬"><svg class="ic"><use href="#i-tl"/></svg></button>
  <button class="tb" aria-label="가운데 정렬"><svg class="ic"><use href="#i-tc"/></svg></button>
  <button class="tb" aria-label="오른쪽 정렬"><svg class="ic"><use href="#i-tr"/></svg></button>
</div>

<div class="toolbar full">
  <i class="grip first"></i>
  <button class="tb" aria-label="직선"><svg class="ic"><use href="#i-line"/></svg></button>
  <button class="tb" aria-label="다각선"><svg class="ic"><use href="#i-poly"/></svg></button>
  <button class="tb" aria-label="곡선"><svg class="ic"><use href="#i-curve"/></svg></button>
  <button class="tb" aria-label="베지어"><svg class="ic"><use href="#i-curve2"/></svg></button>
  <button class="tb" aria-label="호"><svg class="ic"><use href="#i-arc"/></svg></button>
  <i class="sep"></i>
  <button class="tb" aria-label="삼각형"><svg class="ic"><use href="#i-tri"/></svg></button>
  <button class="tb" aria-label="사각형"><svg class="ic"><use href="#i-rect"/></svg></button>
  <button class="tb" aria-label="오각형"><svg class="ic"><use href="#i-pent"/></svg></button>
  <button class="tb" aria-label="육각형"><svg class="ic"><use href="#i-hex"/></svg></button>
  <button class="tb" aria-label="팔각형"><svg class="ic"><use href="#i-oct"/></svg></button>
  <button class="tb" aria-label="타원"><svg class="ic"><use href="#i-ell"/></svg></button>
  <button class="tb" aria-label="자유 도형"><svg class="ic"><use href="#i-free"/></svg></button>
  <button class="tb" aria-label="원호"><svg class="ic"><use href="#i-c"/></svg></button>
  <i class="sep"></i>
  <button class="tb" aria-label="이미지"><svg class="ic"><use href="#i-img"/></svg></button>
  <button class="tb" aria-label="텍스트"><svg class="ic"><use href="#i-a"/></svg></button>
  <button class="tb" aria-label="QR 코드"><svg class="ic"><use href="#i-qr"/></svg></button>
  <button class="tb" aria-label="소리"><svg class="ic"><use href="#i-note"/></svg></button>
  <button class="tb" aria-label="동영상"><svg class="ic"><use href="#i-clap"/></svg></button>
  <button class="tb" aria-label="카메라"><svg class="ic"><use href="#i-cctv"/></svg></button>
  <i class="sep"></i>
  <button class="tb" aria-label="흐름도"><svg class="ic"><use href="#i-flow"/></svg></button>
  <button class="tb" aria-label="지도"><svg class="ic"><use href="#i-globe"/></svg></button>
  <button class="tb" aria-label="피라미드"><svg class="ic"><use href="#i-pyr"/></svg></button>
  <i class="grip"></i>
  <button class="tb" aria-label="복합 차트"><svg class="ic"><use href="#i-ch1"/></svg></button>
  <button class="tb" aria-label="막대 차트"><svg class="ic"><use href="#i-ch2"/></svg></button>
  <button class="tb" aria-label="분산형 차트"><svg class="ic"><use href="#i-ch3"/></svg></button>
  <button class="tb" aria-label="상자 차트"><svg class="ic"><use href="#i-ch4"/></svg></button>
  <button class="tb" aria-label="원형 차트"><svg class="ic"><use href="#i-ch5"/></svg></button>
  <button class="tb" aria-label="도넛 차트"><svg class="ic"><use href="#i-ch6"/></svg></button>
  <button class="tb" aria-label="피라미드 차트"><svg class="ic"><use href="#i-ch7"/></svg></button>
  <button class="tb" aria-label="깔때기 차트"><svg class="ic"><use href="#i-ch8"/></svg></button>
  <button class="tb" aria-label="방사형 차트"><svg class="ic"><use href="#i-ch9"/></svg></button>
  <i class="grip"></i>
  <button class="tb"><span class="abl">abl</span></button>
  <button class="tb" aria-label="콤보 상자"><svg class="ic"><use href="#i-cmb"/></svg></button>
  <button class="tb" aria-label="체크 상자"><svg class="ic"><use href="#i-chk"/></svg></button>
  <button class="tb" aria-label="라디오 버튼"><svg class="ic"><use href="#i-rad"/></svg></button>
  <button class="tb" aria-label="날짜"><svg class="ic"><use href="#i-cal"/></svg></button>
  <button class="tb" aria-label="트리"><svg class="ic"><use href="#i-tree"/></svg></button>
  <button class="tb" aria-label="패널"><svg class="ic"><use href="#i-pnl"/></svg></button>
  <button class="tb" aria-label="알람"><svg class="ic"><use href="#i-sir"/></svg></button>
  <button class="tb" aria-label="알람 이력"><svg class="ic"><use href="#i-sirc"/></svg></button>
  <button class="tb" aria-label="데이터 이력"><svg class="ic"><use href="#i-dbc"/></svg></button>
  <button class="tb" aria-label="작업 이력"><svg class="ic"><use href="#i-gearc"/></svg></button>
  <button class="tb" aria-label="웹"><svg class="ic"><use href="#i-earth"/></svg></button>
  <i class="sep"></i>
  <button class="tb" aria-label="글상자"><svg class="ic"><use href="#i-abox"/></svg></button>
  <button class="more" aria-label="더 보기"></button>
</div>

<main class="main">
<section class="panel left">
  <div class="phead"><h2>페이지 탐색기</h2><button aria-label="고정"><svg class="ic12"><use href="#i-pin"/></svg></button><button aria-label="닫기"><svg class="ic12"><use href="#i-x"/></svg></button></div>
  <div class="search"><input type="text" placeholder="검색" aria-label="검색"><button class="arrow" aria-label="검색 옵션"></button></div>
  <div class="pages">
    <button class="page"><span>page_1</span>
      <svg class="thumb" viewBox="0 0 221 166"><g fill="#efefef" stroke="#000"><path d="M2.500 5.500h97v9h-97z"/><path d="M2.500 27.500h97v31h-97z"/><path d="M2.500 46.500h53v6h-53z"/><path d="M2.500 86.500h47v8h-47zM2.500 94.500h47v8h-47z"/><path d="M2.500 107.500h72v9h-72z"/></g><text x="148" y="26">Page_1</text></svg></button>
    <button class="page sel"><span>page_2</span>
      <svg class="thumb" viewBox="0 0 221 166"><g fill="#efefef" stroke="#000"><path d="M2.500 5.500h72v11h-72z"/><path d="M2.500 27.500h97v31h-97z"/><path d="M4.500 74.500h53v6h-53z" stroke="#333"/><path d="M2.500 86.500h47v8h-47zM2.500 94.500h47v8h-47z"/><path d="M2.500 107.500h72v9h-72z"/></g><text x="148" y="26">Page_2</text></svg></button>
  </div>
  <div class="ptools">
    <button class="tb on" aria-label="미리 보기"><svg class="ic"><use href="#i-img"/></svg></button>
    <button class="tb" aria-label="새 페이지"><svg class="ic"><use href="#i-doc"/></svg></button>
    <button class="tb" aria-label="페이지 복사"><svg class="ic"><use href="#i-docs"/></svg></button>
    <button class="tb" aria-label="삭제"><svg class="ic"><use href="#i-xb"/></svg></button>
  </div>
  <div class="ptabs even"><button class="cur">페이...</button><button>객체 ...</button><button>태그 ...</button><button>장치 ...</button></div>
</section>

<section class="center">
  <div class="dtabs"><button class="dtab">page_1</button><div class="dtab cur"><button>page_2</button><button aria-label="닫기"><svg class="ic12"><use href="#i-x"/></svg></button></div><button class="list" aria-label="페이지 목록"></button></div>
  <div class="doc">
    <div class="work">
      <div class="view">
        <div class="canvas">
          <div class="obj o-text"><b class="h l t"></b><b class="h c t"></b><b class="h r t"></b><b class="h l m"></b><b class="h r m"></b><b class="h l bt"></b><b class="h c bt"></b><b class="h r bt"></b><input class="fill" type="text" aria-label="텍스트"></div>
          <div class="obj o-combo"><b class="h l t"></b><b class="h c t"></b><b class="h r t"></b><b class="h l m"></b><b class="h r m"></b><b class="h l bt"></b><b class="h c bt"></b><b class="h r bt"></b>
            <div class="cbox"><select aria-label="콤보"><option></option></select><svg viewBox="0 0 10 6"><path d="M1 1l4 4 4-4" fill="none" stroke="#444"/></svg></div></div>
          <div class="obj o-check"><b class="h l t"></b><b class="h c t"></b><b class="h r t"></b><b class="h l m"></b><b class="h r m"></b><b class="h l bt"></b><b class="h c bt"></b><b class="h r bt"></b><label class="opt"><input type="checkbox">checkbox</label></div>
          <div class="obj o-radio"><b class="h l t"></b><b class="h c t"></b><b class="h r t"></b><b class="h l q"></b><b class="h r q"></b><b class="h l m"></b><b class="h r m"></b><b class="h l q3"></b><b class="h r q3"></b><b class="h l bt"></b><b class="h c bt"></b><b class="h r bt"></b><div class="opts"><label class="opt"><input type="radio" name="rb">radiobutton</label><label class="opt"><input type="radio" name="rb">radiobutton</label></div></div>
          <div class="obj o-date act"><b class="h l t"></b><b class="h c t"></b><b class="h r t"></b><b class="h l m"></b><b class="h r m"></b><b class="h l bt"></b><b class="h c bt"></b><b class="h r bt"></b>
            <div class="dbox"><input type="text" value="2024-06-21 14:01:33" aria-label="날짜"><button aria-label="달력"><svg viewBox="0 0 22 14"><rect x="1.500" y="1.500" width="10" height="11" rx="1" fill="#e8e8ec" stroke="#8a8a90"/><path d="M3 4.500h7M3 7.500h7M3 10.500h5M4.500 3v8M7.500 3v8" stroke="#a4a8b4"/><path d="M14 5h7l-3.500 4z" fill="#4a5f8a"/></svg></button></div></div>
        </div>
      </div>
      <div class="vsb"><span>
        <svg viewBox="0 0 10 10"><path d="M1.500 7L5 3.500 8.500 7" /></svg></span><i></i><span><svg viewBox="0 0 10 10"><path d="M1.500 3.500L5 7l3.500-3.500"/></svg></span></div>
      <div class="hsb"><span><svg viewBox="0 0 10 10"><path d="M7 1.500L3.500 5 7 8.500"/></svg></span><i></i><span><svg viewBox="0 0 10 10"><path d="M3.500 1.500L7 5 3.500 8.500"/></svg></span></div>
    </div>
    <div class="vtabs">
      <div class="vstrip">
        <div class="vtab cur">디자인<svg class="ic"><use href="#i-puz"/></svg><svg class="ic"><use href="#i-tag"/></svg><svg class="ic"><use href="#i-pic"/></svg></div>
        <div class="vtab lead"><svg class="ic"><use href="#i-alarm"/></svg>페이지 알람</div>
        <div class="vtab lead"><svg class="ic"><use href="#i-scr"/></svg>스크립트<svg class="ic"><use href="#i-fo"/></svg><svg class="ic"><use href="#i-exp"/></svg><svg class="ic"><use href="#i-lay"/></svg><svg class="ic"><use href="#i-tool"/></svg><svg class="ic"><use href="#i-zi"/></svg><svg class="ic"><use href="#i-zo"/></svg></div>
        <div class="vtab lead"><svg class="ic"><use href="#i-xml"/></svg>XML<svg class="ic"><use href="#i-fo"/></svg><svg class="ic"><use href="#i-exp"/></svg><svg class="ic"><use href="#i-zi"/></svg></div>
      </div>
      <div class="vnav"><button class="prev" aria-label="이전"></button><button class="next" aria-label="다음"></button></div>
    </div>
  </div>
</section>

<section class="panel right">
  <div class="phead"><h2>속성</h2><button aria-label="고정"><svg class="ic12"><use href="#i-pin"/></svg></button><button aria-label="닫기"><svg class="ic12"><use href="#i-x"/></svg></button></div>
  <div class="rtools">
    <button class="tb" aria-label="속성"><svg class="ic"><use href="#i-wr"/></svg></button>
    <button class="tb on" aria-label="이벤트"><svg class="ic"><use href="#i-wand"/></svg></button>
    <button class="tb on" aria-label="범주별"><svg class="ic"><use href="#i-cat"/></svg></button>
    <button class="tb" aria-label="사전순"><svg class="ic"><use href="#i-az"/></svg></button>
  </div>
  <div class="grid">
    <table>
      <colgroup><col class="c-gut"><col class="c-name"><col></colgroup>
      <tr class="cat"><td class="gut"></td><th colspan="2"><div>값<svg viewBox="0 0 10 6"><path d="M1.500 5L5 1.500 8.500 5" fill="none" stroke="#555" stroke-width="1.600"/></svg></div></th></tr>
      <tr><td class="gut"></td><td class="name">OnChange</td><td class="val">onChange(event)</td></tr>
    </table>
  </div>
  <div class="split"><i></i><i></i><i></i><i></i></div>
  <div class="desc"></div>
  <div class="ptabs"><button class="cur">속성</button><button>스마트 심볼</button><button>심볼 라이브러리</button><button>히스토리</button></div>
</section>
</main>

<footer class="status">
  <span class="pos">위치: 10 x 390, 크기: 260 x 30, 각도: 0</span>
  <span class="cell">501 x 259</span>
  <div class="cell zoom">
    <label for="zoom">100%</label>
    <button aria-label="축소"><svg class="ic" viewBox="0 0 16 16"><circle cx="8" cy="8" r="7.300" fill="#eef0f3" stroke="#7c818a"/><path d="M4.500 8h7" stroke="#444" stroke-width="1.800"/></svg></button>
    <input id="zoom" type="range" min="0" max="100" value="50">
    <button aria-label="확대"><svg class="ic" viewBox="0 0 16 16"><circle cx="8" cy="8" r="7.300" fill="#eef0f3" stroke="#7c818a"/><path d="M4.500 8h7M8 4.500v7" stroke="#444" stroke-width="1.800"/></svg></button>
    <button aria-label="실제 크기"><svg class="ic"><use href="#i-z100"/></svg></button>
    <button aria-label="새로 고침"><svg class="ic"><use href="#i-ref"/></svg></button>
  </div>
</footer>
</div>
</body>
</html>
```
FILE: styles.css
```css
* { box-sizing: border-box; }
html, body { height: 100%; }
body {
  margin: 0;
  display: flex;
  flex-direction: column;
  border: 1px solid #656d79;
  background: #e6e9ee;
  font: 12px/16px "Noto Sans", "Noto Sans CJK KR", sans-serif;
  color: #3b3b3b;
  overflow: hidden;
}
button, input, select { font: inherit; color: inherit; margin: 0; padding: 0; border: 0; background: none; min-width: 0; }
h1, h2 { margin: 0; font-weight: normal; }
.sprite { position: absolute; width: 0; height: 0; }
.ic { width: 16px; height: 16px; display: block; flex: none; }
.ic12 { width: 12px; height: 12px; display: block; }

.titlebar { display: flex; height: 28px; flex: none; background: linear-gradient(#e9ebee, #e4e7ec); border-top: 1px solid #fff; }
.logo { width: 29px; display: flex; align-items: center; padding: 4px 0 0 9px; }
.title { flex: 1; background: linear-gradient(#f60000, #c80000); color: #fff; text-align: center; font-size: 13px; line-height: 30px; height: 27px; padding-left: 8px; }
.winbtns { width: 101px; display: flex; align-items: center; gap: 16px; padding: 3px 0 0 9px; }

.frame { flex: 1; min-height: 0; margin: 0 6px 6px; border: 1px solid #858a93; display: flex; flex-direction: column; background: #e8ebf0; }
.menubar { display: flex; height: 22px; flex: none; gap: 14px; padding: 1px 0 0 8px; align-items: center; font-size: 13px; }

.toolbar { display: flex; align-items: center; height: 30px; flex: none; align-self: flex-start; padding-right: 4px; background: linear-gradient(#fff, #eceef1); border-bottom: 1px solid #b0b3b9; }
.toolbar.format { height: 29px; padding-right: 1px; }
.toolbar.full { align-self: stretch; padding-right: 0; }
.tb { width: 24px; height: 22px; flex: none; display: flex; align-items: center; justify-content: center; }
.tb.run { width: 52px; justify-content: flex-start; gap: 4px; padding-left: 4px; }
.tb.on { width: 22px; margin: 0 1px; border: 1px solid #c79a3c; border-radius: 3px; background: linear-gradient(#fbdc7e, #ffe88e); }
.tb.txt { font: bold 15px/20px "Liberation Serif", serif; color: #444; }
.abl { width: 16px; height: 14px; border: 1px solid #5c87b2; background: #fff; font: 9px/12px "Liberation Sans", sans-serif; color: #000; text-align: center; }
.grip { width: 10px; height: 27px; flex: none; display: flex; border-left: 1px solid #fff; margin-left: 3px; }
.grip::before { content: ""; width: 2px; height: 14px; margin: auto auto auto 2px; background: repeating-linear-gradient(#b3b6bb 0 2px, transparent 2px 4px); }
.grip.first { width: 11px; margin: 0; border: 0; }
.grip.first::before { margin-left: 3px; }
.grip.wide { margin-left: 6px; width: 12px; }
.sep { width: 7px; height: 18px; flex: none; display: flex; }
.sep::before { content: ""; width: 1px; margin: auto; height: 18px; background: #c2c5ca; }
.sep.wide { width: 9px; }
.size { width: 50px; height: 20px; border: 1px solid #a5acb8; background: #f0f0f0; margin-left: 2px; }
.times { width: 17px; text-align: center; }
.combo { display: flex; height: 20px; flex: none; border: 1px solid #a5acb8; background: #fff; align-items: stretch; margin-left: 1px; }
.combo.gap { margin-left: 6px; }
.combo select { flex: 1; appearance: none; padding-left: 4px; color: #111; }
.w50 { width: 50px; }
.w70 { width: 70px; }
.w102 { width: 102px; }
.arrow { width: 16px; border-left: 1px solid #a5acb8; background: linear-gradient(#fafbfc, #e9ecf0); display: flex; align-items: center; justify-content: center; }
.arrow::before, .more::before, .list::before { content: ""; border: 4px solid transparent; border-top-color: #596069; border-bottom: 0; }
.swatch { flex: 1; margin: 4px 5px; border: 1px solid #000; }
.swatch.blue { background: #7fb3ee; }
.swatch.black { background: #000; }
.dash { flex: 1; margin: 7px 2px 0; height: 3px; background: #000; }
.more { margin-left: auto; width: 16px; align-self: stretch; border-left: 1px solid #c6c9cf; display: flex; align-items: center; justify-content: center; }

.main { flex: 1; min-height: 0; display: flex; gap: 4px; padding: 2px; }
.panel { display: flex; flex-direction: column; flex: none; border: 1px solid #8f96a1; border-radius: 2px; background: #e8ebf0; min-height: 0; }
.left { width: 246px; }
.right { width: 343px; }
.phead { display: flex; align-items: center; height: 22px; flex: none; padding: 0 5px; gap: 7px; color: #5f6b7c; }
.phead h2 { flex: 1; font-size: 11px; }
.search { display: flex; height: 20px; margin: 3px 6px 4px; flex: none; border: 1px solid #a5acb8; background: #fff; }
.search input { flex: 1; padding-left: 4px; font-size: 11px; }
.search input::placeholder { color: #8d8d8d; }
.pages { flex: 1; min-height: 0; background: #fafafa; margin: 0 1px; padding: 1px 8px 0 10px; }
.page { display: block; width: 223px; text-align: left; font-size: 13px; line-height: 19px; color: #111; }
.page span { display: block; padding-left: 2px; }
.thumb { display: block; width: 223px; height: 168px; border: 1px solid #000; background: #f4f4f4; font: 14px "Liberation Sans", Arial, sans-serif; fill: #222; }
.sel .thumb { border-color: #f00; box-shadow: 0 0 0 1px #f00; }
.ptools { display: flex; align-items: center; height: 28px; flex: none; margin: 0 1px; padding-left: 2px; background: linear-gradient(#fff, #eceef1); }
.ptabs { display: flex; height: 29px; flex: none; border-top: 1px solid #a5acb8; background: linear-gradient(#cfd3da, #e0e3e8); padding: 0 3px 0 4px; font-size: 11px; }
.ptabs button { height: 24px; padding: 0 11px 0 12px; white-space: nowrap; }
.ptabs .cur { background: #e8ebf0; border: 1px solid #a5acb8; border-top: 0; padding: 0 9px; }
.even { padding-left: 3px; }
.even button { width: 59px; padding: 0; }
.even .cur { padding: 0 4px 0 0; }

.center { flex: 1; min-width: 0; display: flex; flex-direction: column; }
.dtabs { display: flex; align-items: flex-end; height: 23px; flex: none; padding-left: 4px; }
.dtab { height: 21px; width: 76px; padding-left: 7px; border: 1px solid #a5acb8; border-bottom: 0; background: linear-gradient(#d9dce1, #cdd1d7); text-align: left; }
.dtab.cur { display: flex; align-items: center; gap: 11px; height: 24px; width: 78px; margin: 0 0 -1px -1px; padding-left: 8px; background: #e8ebf0; }
.list { margin: 0 8px 0 auto; height: 22px; display: flex; align-items: center; }
.doc { flex: 1; min-height: 0; display: flex; flex-direction: column; border: 1px solid #a5acb8; border-top-width: 2px; border-left-width: 2px; }
.work { flex: 1; min-height: 0; display: grid; grid-template: 1fr 17px / 1fr 16px; margin-right: 4px; border: 1px solid #a5acb8; border-width: 0 1px 1px 0; background: #f0f0f0; }
.view { overflow: hidden; background: #d3d3d3; padding: 9px 0 0 9px; border-right: 1px solid #fff; border-bottom: 1px solid #fff; min-height: 0; }
.canvas {
  position: relative; height: 100%; border: 1px solid #000; border-width: 1px 0 0 1px;
  background: linear-gradient(to right, transparent 9px, #dcdcdc 9px) 0 0 / 10px 10px, linear-gradient(transparent 9px, #dcdcdc 9px) 0 0 / 10px 10px, #f5f5f5;
}
.obj { position: absolute; font: 12px/16px Roboto, sans-serif; color: #222; }
.obj > :not(.h) { position: relative; }
.o-text { left: 10px; top: 20px; width: 260px; height: 40px; }
.o-combo { left: 10px; top: 100px; width: 350px; height: 110px; }
.o-check { left: 20px; top: 270px; width: 190px; height: 20px; }
.o-radio { left: 10px; top: 310px; width: 170px; height: 60px; }
.o-date { left: 10px; top: 390px; width: 260px; height: 30px; }
.h { position: absolute; width: 9px; height: 9px; margin: -5px 0 0 -5px; border: 1px solid #000; background: #fff; }
.act .h { width: 11px; height: 11px; margin: -6px 0 0 -6px; background: #0ff; }
.l { left: 0; }
.c { left: 50%; }
.r { left: 100%; }
.t { top: 0; }
.q { top: 25%; }
.m { top: 50%; }
.q3 { top: 75%; }
.bt { top: 100%; }
.fill { display: block; width: 100%; height: 100%; background: #fff; }
.cbox { display: flex; align-items: center; height: 20px; background: #fff; border: 1px solid #767676; padding-right: 3px; }
.cbox select { flex: 1; appearance: none; }
.cbox svg { width: 10px; height: 6px; }
.opts { height: 100%; display: flex; flex-direction: column; }
.opt { display: flex; align-items: center; gap: 5px; height: 100%; background: #f4f4f4; padding-bottom: 1px; }
.opt input { appearance: none; width: 13px; height: 13px; border: 1px solid #333; background: #fff; }
.opt input[type="radio"] { border-radius: 50%; }
.dbox { display: flex; align-items: center; height: 100%; background: #fff; border: 1px solid #767676; padding: 0 5px 0 1px; }
.dbox input { flex: 1; color: #000; }
.dbox svg { width: 22px; height: 14px; display: block; }
.vsb, .hsb { display: flex; background: #f0f0f0; }
.vsb { flex-direction: column; }
.hsb { grid-column: 1 / 3; padding-right: 18px; }
.vsb span, .hsb span { width: 17px; height: 17px; display: flex; align-items: center; justify-content: center; }
.vsb span { width: 15px; }
.hsb span { width: 16px; }
.vsb svg, .hsb svg { width: 10px; height: 10px; fill: none; stroke: #505050; stroke-width: 2; }
.vsb i { flex: 1; background: #cdcdcd; margin-bottom: 28px; width: 15px; }
.hsb i { width: 61%; margin: 0 auto 1px 1px; background: #cdcdcd; }
.vtabs { display: flex; height: 29px; flex: none; padding: 0 4px 0 2px; }
.vstrip { flex: 1; min-width: 0; display: flex; overflow: hidden; height: 28px; background: linear-gradient(#cdd1d8, #dfe2e7); border-bottom: 1px solid #a5acb8; }
.vtab { display: flex; align-items: center; gap: 6px; flex: none; padding: 0 6px 0 7px; border-right: 2px solid #a5acb8; white-space: nowrap; font-size: 11px; color: #222; }
.vtab.cur { background: #fff; padding: 0 7px 0 9px; border-right-width: 1px; }
.lead svg:first-child { margin-right: -3px; }
.vnav { display: flex; align-items: center; width: 32px; flex: none; justify-content: space-between; padding: 6px 4px 0 5px; }
.prev, .next { border: 4px solid transparent; }
.prev { border-right-color: #b3b7be; border-left: 0; }
.next { border-left: 5px solid #555b63; border-right: 0; }

.rtools { display: flex; align-items: center; height: 29px; flex: none; padding-left: 3px; }
.grid { flex: 1; min-height: 0; margin: 0 1px; border: 1px solid #a5acb8; background: #fff; }
table { width: 100%; border-collapse: collapse; table-layout: fixed; }
td, th { padding: 0; height: 18px; line-height: 17px; border: 1px solid #dde0e5; border-width: 0 0 1px 1px; font-weight: normal; text-align: left; }
.c-gut { width: 16px; }
.c-name { width: 152px; }
.gut { background: #f5f6f8; border-left: 0; border-bottom: 0; }
.cat th { background: #f5f6f8; border-left: 0; font-size: 11px; }
.cat div { display: flex; align-items: center; justify-content: space-between; padding: 0 6px 0 4px; }
.cat svg { width: 10px; height: 6px; }
td.name { padding-left: 18px; }
td.val { padding-left: 3px; font-weight: bold; color: #000; }
.split { display: flex; gap: 2px; justify-content: center; align-items: center; height: 6px; flex: none; }
.split i { width: 2px; height: 2px; background: #8f96a1; }
.desc { height: 60px; flex: none; margin: 0 1px 1px; border: 1px solid #a5acb8; border-radius: 2px; }

.status { display: flex; align-items: center; height: 25px; flex: none; padding: 0 6px 0 8px; background: linear-gradient(#e3e6ea, #bdc1c6); border-top: 1px solid #9299a5; font-size: 13px; }
.pos { flex: 1; }
.cell { border-left: 1px solid #a4a8ae; box-shadow: inset 1px 0 #f2f3f5; height: 22px; line-height: 22px; padding: 0 20px 0 8px; }
.zoom { display: flex; align-items: center; padding-right: 0; gap: 7px; font-size: 12px; }
.zoom label { margin-right: -3px; }
.zoom button + button { margin-left: 1px; }
#zoom { appearance: none; width: 154px; height: 16px; background: linear-gradient(to right, #4d84bb 50%, #9ca4ad 50%) center / 100% 2px no-repeat; }
#zoom::-webkit-slider-thumb { appearance: none; width: 10px; height: 14px; background: linear-gradient(#fff3b8, #f2c64a); border: 1px solid #d9a520; clip-path: polygon(0 0, 100% 0, 100% 70%, 50% 100%, 0 70%); }
```
